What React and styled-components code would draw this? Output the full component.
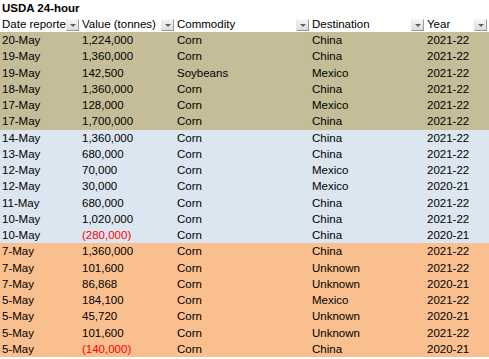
import React from "react";
import styled, { createGlobalStyle } from "styled-components";

const Global = createGlobalStyle`
  html, body { margin: 0; padding: 0; background: #ffffff; }
  body { font-family: "Liberation Sans", Arial, sans-serif; font-size: 11.5px; color: #000; }
`;

const COLS = "80px 95px 135px 115px 1fr";

const Sheet = styled.div`
  width: 489px;
  height: 359px;
  overflow: hidden;
  display: flex;
  flex-direction: column;
`;

const Title = styled.div`
  height: 16px;
  line-height: 16px;
  padding-left: 2px;
  font-weight: bold;
  font-size: 11.5px;
`;

const HeaderRow = styled.div`
  display: grid;
  grid-template-columns: ${COLS};
  height: 16px;
  line-height: 17px;
`;

const HeaderCell = styled.div`
  position: relative;
  overflow: hidden;
  white-space: nowrap;
  padding-left: 2px;
`;

const FilterBtn = styled.div`
  position: absolute;
  right: ${(p) => p.$right || 0}px;
  top: 3px;
  width: 13px;
  height: 12px;
  box-sizing: border-box;
  background: linear-gradient(#f4f4f4, #dcdcdc);
  border-right: 1px solid #9a9a9a;
  border-bottom: 1px solid #9a9a9a;
  border-left: 1px solid #e6e6e6;
  border-top: 1px solid #f8f8f8;
  display: flex;
  align-items: center;
  justify-content: center;
`;

const Tri = styled.div`
  width: 0;
  height: 0;
  border-left: 3px solid transparent;
  border-right: 3px solid transparent;
  border-top: 3px solid #606060;
`;

const Row = styled.div`
  display: grid;
  grid-template-columns: ${COLS};
  height: 16.25px;
  line-height: 16.25px;
  background: ${(p) => p.$bg};
`;

const Cell = styled.div`
  padding-left: 2px;
  white-space: nowrap;
  overflow: hidden;
  color: ${(p) => (p.$neg ? "#ff0000" : "#000")};
`;

const TAN = "#c4bd97";
const BLUE = "#dce6f1";
const ORANGE = "#fabf8f";

const data = [
  ["20-May", "1,224,000", "Corn", "China", "2021-22", TAN],
  ["19-May", "1,360,000", "Corn", "China", "2021-22", TAN],
  ["19-May", "142,500", "Soybeans", "Mexico", "2021-22", TAN],
  ["18-May", "1,360,000", "Corn", "China", "2021-22", TAN],
  ["17-May", "128,000", "Corn", "Mexico", "2021-22", TAN],
  ["17-May", "1,700,000", "Corn", "China", "2021-22", TAN],
  ["14-May", "1,360,000", "Corn", "China", "2021-22", BLUE],
  ["13-May", "680,000", "Corn", "China", "2021-22", BLUE],
  ["12-May", "70,000", "Corn", "Mexico", "2021-22", BLUE],
  ["12-May", "30,000", "Corn", "Mexico", "2020-21", BLUE],
  ["11-May", "680,000", "Corn", "China", "2021-22", BLUE],
  ["10-May", "1,020,000", "Corn", "China", "2021-22", BLUE],
  ["10-May", "(280,000)", "Corn", "China", "2020-21", BLUE],
  ["7-May", "1,360,000", "Corn", "China", "2021-22", ORANGE],
  ["7-May", "101,600", "Corn", "Unknown", "2021-22", ORANGE],
  ["7-May", "86,868", "Corn", "Unknown", "2020-21", ORANGE],
  ["5-May", "184,100", "Corn", "Mexico", "2021-22", ORANGE],
  ["5-May", "45,720", "Corn", "Unknown", "2020-21", ORANGE],
  ["5-May", "101,600", "Corn", "Unknown", "2021-22", ORANGE],
  ["5-May", "(140,000)", "Corn", "China", "2020-21", ORANGE],
];

const headers = ["Date reported", "Value (tonnes)", "Commodity", "Destination", "Year"];

export default function App() {
  return (
    <>
      <Global />
      <Sheet>
        <Title>USDA 24-hour</Title>
        <HeaderRow>
          {headers.map((h, i) => (
            <HeaderCell key={h}>
              {h}
              <FilterBtn $right={i === 4 ? 2 : 1}>
                <Tri />
              </FilterBtn>
            </HeaderCell>
          ))}
        </HeaderRow>
        {data.map((r, i) => (
          <Row key={i} $bg={r[5]}>
            <Cell>{r[0]}</Cell>
            <Cell $neg={r[1].startsWith("(")}>{r[1]}</Cell>
            <Cell>{r[2]}</Cell>
            <Cell>{r[3]}</Cell>
            <Cell>{r[4]}</Cell>
          </Row>
        ))}
      </Sheet>
    </>
  );
}
